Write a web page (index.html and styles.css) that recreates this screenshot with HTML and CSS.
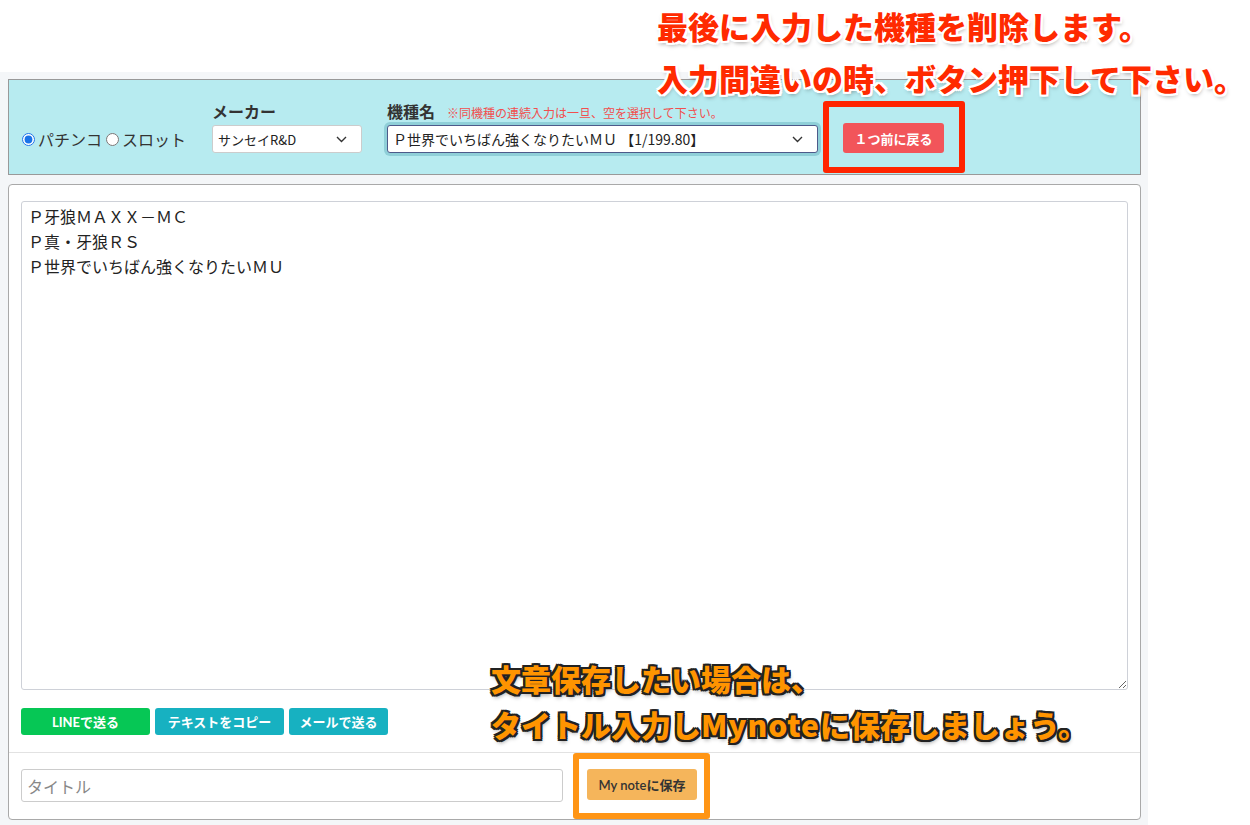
FILE: index.html
```html
<!DOCTYPE html>
<html lang="ja">
<head>
    <meta charset="UTF-8">
    <meta name="viewport" content="width=device-width, initial-scale=1.0">
    <title>機種入力</title>
    <link rel="stylesheet" href="styles.css">
</head>
<body>

    <div class="page">
        <div class="search-panel">
            <div class="kind">
                <label><input type="radio" name="kind" checked>パチンコ</label>
                <label><input type="radio" name="kind">スロット</label>
            </div>

            <div class="field">
                <div class="field-label">メーカー</div>
                <div class="select-wrap maker">
                    <select>
                        <option>サンセイR&amp;D</option>
                    </select>
                    <svg class="chevron" width="11" height="7" viewBox="0 0 11 7"><path d="M1 1l4.5 4.5L10 1" fill="none" stroke="#333" stroke-width="1.4"/></svg>
                </div>
            </div>

            <div class="field">
                <div class="field-label">機種名<span class="hint">※同機種の連続入力は一旦、空を選択して下さい。</span></div>
                <div class="select-wrap model">
                    <select>
                        <option>Ｐ世界でいちばん強くなりたいＭＵ 【1/199.80】</option>
                    </select>
                    <svg class="chevron" width="11" height="7" viewBox="0 0 11 7"><path d="M1 1l4.5 4.5L10 1" fill="none" stroke="#333" stroke-width="1.4"/></svg>
                </div>
            </div>

            <button class="back-btn">１つ前に戻る</button>
        </div>

        <div class="card">
            <div class="card-body">
                <textarea class="memo">Ｐ牙狼ＭＡＸＸ－ＭＣ
Ｐ真・牙狼ＲＳ
Ｐ世界でいちばん強くなりたいＭＵ</textarea>
                <div class="share">
                    <button class="btn line-btn">LINEで送る</button>
                    <button class="btn copy-btn">テキストをコピー</button>
                    <button class="btn mail-btn">メールで送る</button>
                </div>
            </div>
            <div class="card-footer">
                <input type="text" class="title-input" placeholder="タイトル">
                <button class="btn save-btn">My noteに保存</button>
            </div>
        </div>
    </div>

    <!-- annotations -->
    <div class="callout callout-red">最後に入力した機種を削除します。<br>入力間違いの時、ボタン押下して下さい。</div>
    <div class="frame frame-red"></div>

    <div class="callout callout-orange">文章保存したい場合は、<br>タイトル入力し<span class="latin">Mynote</span>に保存しましょう。</div>
    <div class="frame frame-orange"></div>

</body>
</html>
```

FILE: styles.css
```css
* {
    box-sizing: border-box;
}

body {
    margin: 0;
    padding: 0;
    background: #fff;
    color: #333;
    font-family: "Noto Sans CJK JP", sans-serif;
    position: relative;
    height: 825px;
    overflow: hidden;
}

.page {
    width: 1148px;
    margin-top: 72px;
    padding: 7px 7px 5px 8px;
    background: #f4f6f8;
}

/* top search bar */
.search-panel {
    display: flex;
    align-items: flex-end;
    gap: 25px;
    height: 96px;
    padding: 20px 12px 21px 12px;
    background: #b7ebf0;
    border: 1px solid #999;
}

.kind {
    display: flex;
    align-items: center;
    height: 28px;
    margin-right: 1px;
    font-size: 16px;
    color: #333;
}

.kind label {
    display: flex;
    align-items: center;
}

.kind input {
    width: 13px;
    height: 13px;
    margin: 0 3px 0 1px;
    accent-color: #1a73e8;
}

.kind label + label input {
    margin-left: 4px;
}

.field-label {
    height: 22px;
    margin-bottom: 3px;
    font-size: 16px;
    font-weight: 700;
    line-height: 22px;
    color: #333;
}

.hint {
    margin-left: 12px;
    font-size: 12px;
    font-weight: 400;
    color: #f24e4e;
}

.select-wrap {
    position: relative;
}

.select-wrap select {
    appearance: none;
    -webkit-appearance: none;
    height: 28px;
    padding: 0 28px 0 5px;
    background: #fff;
    border: 1px solid #ccc;
    border-radius: 3px;
    font-family: "Noto Sans CJK JP", sans-serif;
    color: #222;
}

.select-wrap .chevron {
    position: absolute;
    top: 11px;
    right: 15px;
    pointer-events: none;
}

.maker select {
    width: 150px;
    font-size: 13px;
}

.model select {
    width: 431px;
    font-size: 14px;
    border-color: #4d5a8a;
    box-shadow: 0 0 0 3px #8fcfd8;
}

.back-btn {
    width: 101px;
    height: 30px;
    background: #f2555a;
    color: #fff;
    border: none;
    border-radius: 3px;
    font-family: "Noto Sans CJK JP", sans-serif;
    font-size: 13px;
    font-weight: 700;
}

/* memo card */
.card {
    margin-top: 9px;
    background: #fff;
    border: 1px solid #a9a9a9;
    border-radius: 4px;
}

.card-body {
    padding: 16px 12px 17px 12px;
}

.memo {
    display: block;
    width: 100%;
    height: 489px;
    padding: 2px 6px;
    border: 1px solid #ced1d8;
    border-radius: 3px;
    font-family: "Noto Sans CJK JP", sans-serif;
    font-size: 16px;
    line-height: 25px;
    color: #222;
}

.share {
    display: flex;
    gap: 5px;
    margin-top: 18px;
}

.btn {
    height: 27px;
    border: none;
    border-radius: 3px;
    font-family: Lato, "Noto Sans CJK JP", sans-serif;
    font-size: 13px;
    font-weight: 700;
    color: #fff;
}

.line-btn {
    width: 129px;
    background: #06c755;
}

.copy-btn {
    width: 129px;
    background: #17b1c1;
}

.mail-btn {
    width: 99px;
    background: #17b1c1;
}

.card-footer {
    display: flex;
    align-items: flex-start;
    padding: 16px 12px 17px 12px;
    border-top: 1px solid #e2e2e2;
}

.title-input {
    width: 542px;
    height: 33px;
    padding: 0 5px;
    border: 1px solid #ccc;
    border-radius: 3px;
    font-family: "Noto Sans CJK JP", sans-serif;
    font-size: 16px;
}

.title-input::placeholder {
    color: #888;
}

.save-btn {
    width: 110px;
    height: 31px;
    margin-left: 24px;
    background: #f5b55b;
    color: #333;
    font-weight: 600;
}

/* annotations drawn over the screenshot */
.callout {
    position: absolute;
    font-family: "Noto Sans CJK JP", sans-serif;
    font-weight: 900;
    white-space: nowrap;
}

.callout-red {
    left: 657px;
    top: 0;
    font-size: 31px;
    line-height: 52px;
    color: #ff2a00;
    text-shadow:
        2px 0 #fff, -2px 0 #fff, 0 2px #fff, 0 -2px #fff,
        2px 2px #fff, -2px -2px #fff, 2px -2px #fff, -2px 2px #fff,
        1px 3px 4px rgba(0, 0, 0, 0.35);
}

.callout-orange {
    left: 491px;
    top: 655px;
    font-size: 30px;
    line-height: 46px;
    color: #ff9400;
    text-shadow:
        2px 0 #222, -2px 0 #222, 0 2px #222, 0 -2px #222,
        2px 2px #222, -2px -2px #222, 2px -2px #222, -2px 2px #222,
        1px 3px 4px rgba(0, 0, 0, 0.4);
}

.callout-orange .latin {
    letter-spacing: 1px;
}

.frame {
    position: absolute;
    border-radius: 3px;
}

.frame-red {
    left: 823px;
    top: 101px;
    width: 142px;
    height: 72px;
    border: 6px solid #ff2400;
}

.frame-orange {
    left: 573px;
    top: 753px;
    width: 137px;
    height: 66px;
    border: 6px solid #ff9515;
}
```
